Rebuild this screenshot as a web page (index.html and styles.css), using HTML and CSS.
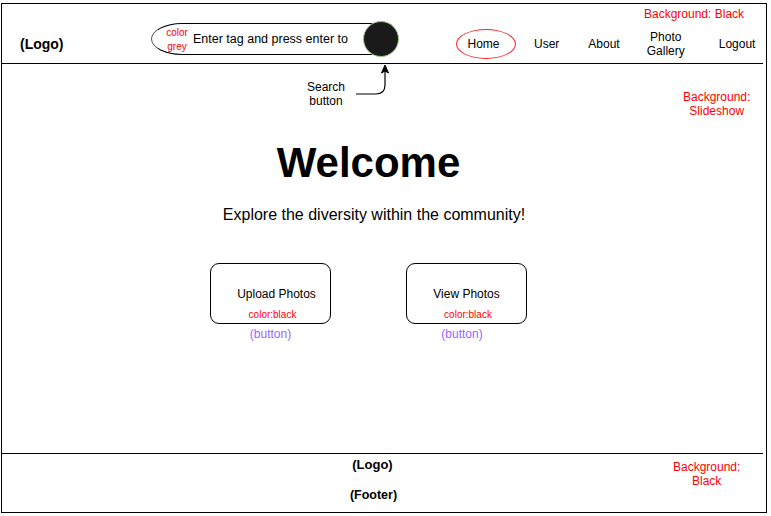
FILE: index.html
```html
<!DOCTYPE html>
<html lang="en">
<head>
<meta charset="utf-8">
<title>Welcome</title>
<link rel="stylesheet" href="styles.css">
</head>
<body>
<div class="frame">
  <header class="header">
    <div class="logo">(Logo)</div>
    <div class="search">
      <div class="search-field">
        <span class="note-small">color<br>grey</span>
        <span class="placeholder">Enter tag and press enter to</span>
      </div>
      <div class="search-btn"></div>
    </div>
    <nav class="nav">
      <span class="nav-item home">Home</span>
      <span class="nav-item user">User</span>
      <span class="nav-item about">About</span>
      <span class="nav-item gallery">Photo<br>Gallery</span>
      <span class="nav-item logout">Logout</span>
    </nav>
    <div class="note note-header">Background: Black</div>
  </header>
  <main class="main">
    <div class="search-callout">
      <span class="callout-text">Search<br>button</span>
      <svg class="callout-arrow" width="40" height="34" viewBox="0 0 40 34">
        <path d="M1 30 H21 Q30 30 30 21 V6" fill="none" stroke="#000" stroke-width="1.2"/>
        <path d="M30 1 L26.5 9 L30 7 L33.5 9 Z" fill="#000" stroke="#000" stroke-width="1"/>
      </svg>
    </div>
    <div class="note note-main">Background:<br>Slideshow</div>
    <h1 class="title">Welcome</h1>
    <p class="subtitle">Explore the diversity within the community!</p>
    <div class="actions">
      <div class="action">
        <div class="btn">
          <span class="btn-label upload">Upload Photos</span>
          <span class="btn-note upload-note">color:black</span>
        </div>
        <span class="btn-tag">(button)</span>
      </div>
      <div class="action">
        <div class="btn">
          <span class="btn-label">View Photos</span>
          <span class="btn-note">color:black</span>
        </div>
        <span class="btn-tag shift">(button)</span>
      </div>
    </div>
  </main>
  <footer class="footer">
    <div class="footer-logo">(Logo)</div>
    <div class="footer-text">(Footer)</div>
    <div class="note note-footer">Background:<br>Black</div>
  </footer>
</div>
</body>
</html>
```

FILE: styles.css
```css
* { box-sizing: border-box; }
html, body { margin: 0; padding: 0; background: #fff; }
body {
  font-family: "Liberation Sans", Arial, sans-serif;
  color: #000;
  width: 771px;
  height: 516px;
  overflow: hidden;
}
.frame {
  margin: 3px 0 0 1px;
  width: 766px;
  height: 510px;
  border: 1px solid #000;
  display: flex;
  flex-direction: column;
  position: relative;
}
.header {
  height: 60px;
  margin-right: 3px;
  border-bottom: 1px solid #000;
  display: flex;
  align-items: center;
  padding: 21px 0 0 18px;
  position: relative;
}
.logo {
  width: 131px;
  font-size: 14px;
  font-weight: bold;
}
.search {
  display: flex;
  align-items: center;
  margin-bottom: 11px;
}
.search-field {
  width: 230px;
  height: 32px;
  border: 1px solid #000;
  border-left-color: #555;
  border-right: none;
  border-radius: 31px 0 0 31px / 16px 0 0 16px;
  display: flex;
  align-items: center;
  padding-left: 13px;
}
.note-small {
  color: #ff0000;
  font-size: 10px;
  line-height: 14px;
  text-align: center;
  width: 24px;
  margin-top: 3px;
}
.placeholder {
  font-size: 12.5px;
  margin-left: 4px;
  margin-top: 1px;
}
.search-btn {
  width: 36px;
  height: 36px;
  border-radius: 50%;
  background: #1a1a1a;
  border: 1px solid #9cc58a;
  margin-left: -18px;
}
.nav {
  display: flex;
  align-items: center;
  margin-left: 57px;
  font-size: 12px;
}
.nav-item { text-align: center; line-height: 14px; }
.home {
  width: 60px;
  height: 30px;
  border: 1px solid #ff2222;
  border-radius: 50%;
  display: flex;
  align-items: center;
  justify-content: center;
  padding-right: 5px;
}
.user { margin-left: 18px; }
.about { margin-left: 29px; }
.gallery { margin-left: 27px; }
.logout { margin-left: 34px; }
.note {
  position: absolute;
  color: #ff0000;
  font-size: 12px;
  line-height: 14px;
  text-align: center;
}
.note-header { top: 3px; left: 642px; }
.main {
  flex: 1;
  position: relative;
  display: flex;
  flex-direction: column;
  align-items: center;
  padding-right: 31px;
}
.note-main { top: 26px; left: 681px; }
.search-callout {
  position: absolute;
  top: 0;
  left: 305px;
  display: flex;
  align-items: flex-start;
}
.callout-text {
  font-size: 12px;
  line-height: 14px;
  text-align: center;
  margin-top: 16px;
}
.callout-arrow { margin-left: 10px; margin-top: 0px; }
.title {
  margin: 75px 0 0;
  font-size: 42px;
  line-height: 48px;
  font-weight: bold;
}
.subtitle {
  margin: 18px 0 0 11px;
  font-size: 16px;
  line-height: 20px;
}
.actions {
  margin-top: 38px;
  display: flex;
  gap: 75px;
}
.action {
  display: flex;
  flex-direction: column;
  align-items: center;
}
.btn {
  width: 121px;
  height: 61px;
  border: 1px solid #000;
  border-radius: 9px;
  display: flex;
  flex-direction: column;
  align-items: center;
  padding-top: 23px;
}
.btn-label { font-size: 12px; line-height: 14px; }
.btn-label.upload { margin-left: 12px; }
.btn-note {
  color: #ff0000;
  font-size: 10px;
  line-height: 12px;
  margin-top: 8px;
  margin-left: 3px;
}
.btn-note.upload-note { margin-left: 4px; }
.btn-tag {
  color: #9966ff;
  font-size: 12px;
  line-height: 14px;
  margin-top: 3px;
}
.btn-tag.shift { margin-right: 9px; }
.footer {
  height: 59px;
  margin-right: 3px;
  border-top: 1px solid #000;
  position: relative;
  display: flex;
  flex-direction: column;
  align-items: center;
  padding: 3px 20px 0 0;
  font-weight: bold;
}
.footer-logo { font-size: 13px; line-height: 16px; }
.footer-text { font-size: 12.5px; line-height: 16px; margin-top: 14px; margin-left: 2px; }
.note-footer { top: 6px; left: 671px; font-weight: normal; }
```
